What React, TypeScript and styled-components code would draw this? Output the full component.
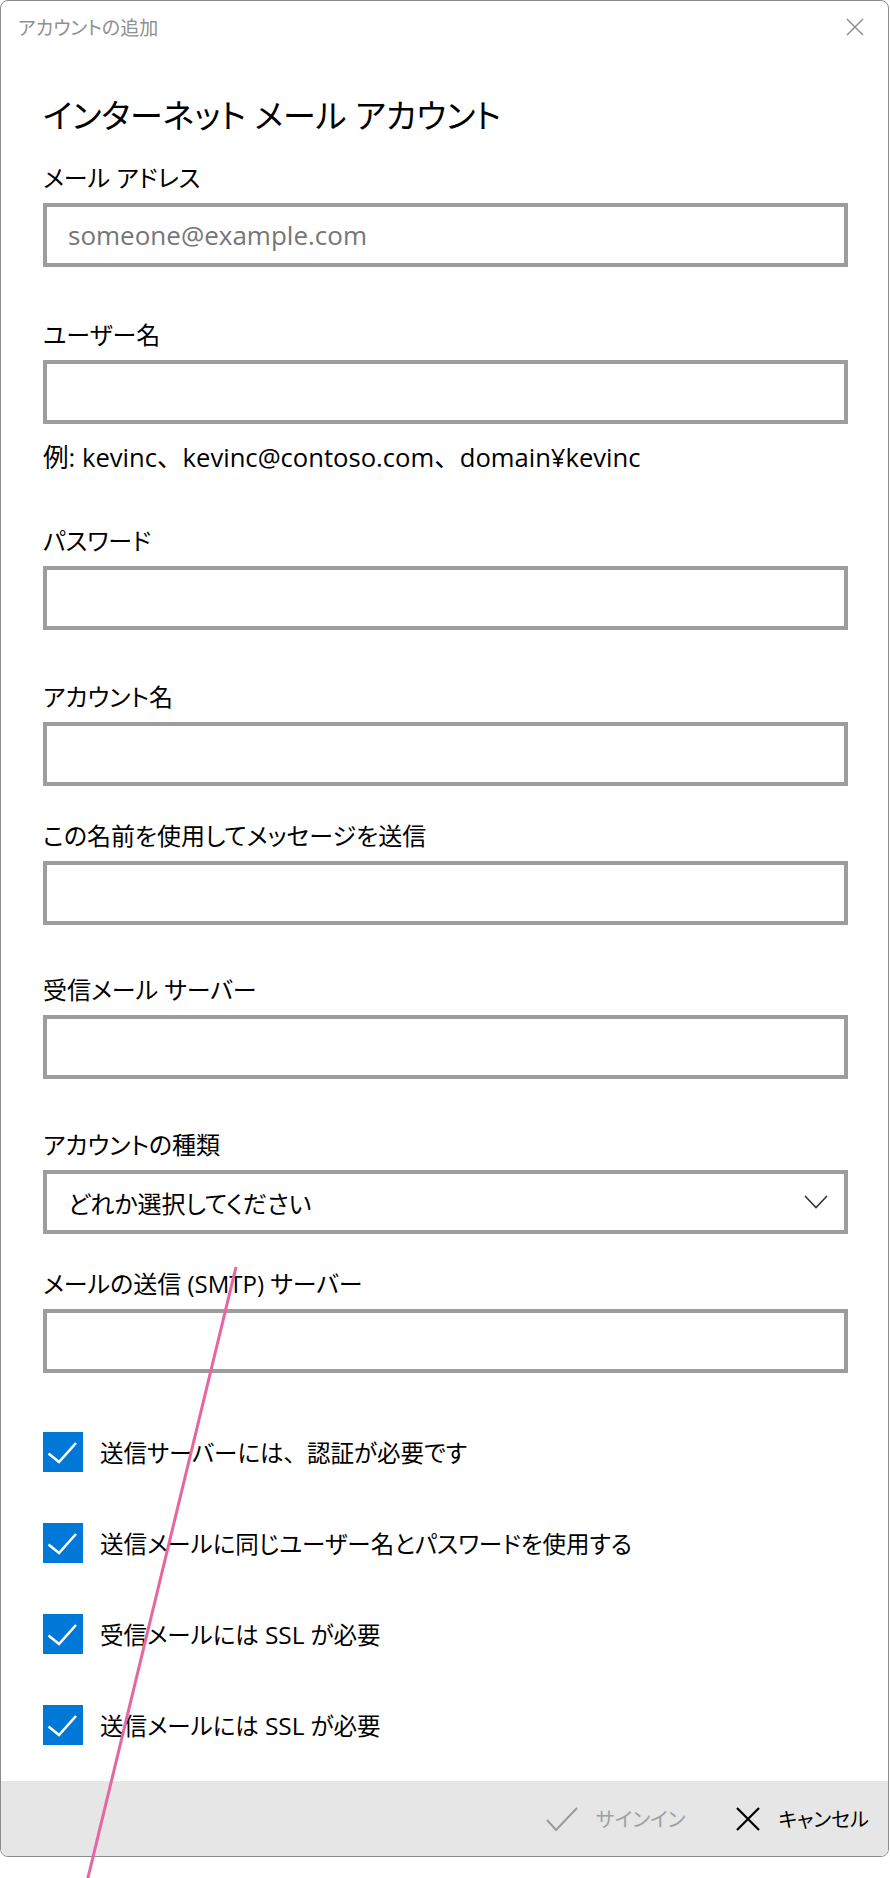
import React from "react";
import styled, { createGlobalStyle } from "styled-components";

const GlobalStyle = createGlobalStyle`
  html, body { margin: 0; padding: 0; background: #ffffff; }
  body {
    font-family: "Open Sans", "Noto Sans CJK JP", sans-serif;
    color: #000;
    font-feature-settings: "palt";
  }
  * { box-sizing: border-box; }
`;

const Page = styled.div`
  position: relative;
  width: 890px;
  height: 1878px;
  background: #fff;
`;

const Window = styled.div`
  width: 889px;
  border: 1px solid #8c8c8c;
  border-radius: 8px;
  overflow: hidden;
  display: flex;
  flex-direction: column;
  background: #fff;
`;

const TitleBar = styled.div`
  height: 52px;
  display: flex;
  align-items: center;
  justify-content: space-between;
  padding: 0 24px 0 17px;
`;

const TitleText = styled.span`
  font-size: 19px;
  color: #909090;
  font-feature-settings: "palt";
`;

const CloseIcon = styled.svg`
  width: 18px;
  height: 18px;
  display: block;
`;

const Content = styled.div`
  display: flex;
  flex-direction: column;
  padding: 37px 40px 36px 42px;
`;

const Heading = styled.h1`
  margin: 0;
  font-size: 33px;
  line-height: 52px;
  font-weight: 400;
  font-feature-settings: "palt";
`;

const Field = styled.div<{ $mt: number }>`
  display: flex;
  flex-direction: column;
  gap: 7px;
  margin-top: ${(p) => p.$mt}px;
`;

const Label = styled.div`
  font-size: 24px;
  line-height: 36px;
  font-feature-settings: "palt";
`;

const TextBox = styled.input`
  height: 64px;
  width: 100%;
  border: 4px solid #9d9d9d;
  background: #fff;
  padding: 0 21px;
  font-family: "Open Sans", "Noto Sans CJK JP", sans-serif;
  font-size: 26px;
  color: #000;
  outline: none;
  &::placeholder { color: #767676; }
`;

const Hint = styled.div`
  margin-top: 16px;
  font-size: 25.6px;
  line-height: 36px;
  font-feature-settings: "palt";
`;

const Punct = styled.span`
  font-feature-settings: normal;
`;

const Latin = styled.span`
  font-size: 1.04em;
`;

const SelectBox = styled.div`
  height: 64px;
  border: 4px solid #9d9d9d;
  background: #fff;
  display: flex;
  align-items: center;
  justify-content: space-between;
  padding: 0 16px 0 21px;
  font-size: 24px;
  font-feature-settings: "palt";
`;

const Chevron = styled.svg`
  width: 24px;
  height: 14px;
  display: block;
`;

const CheckList = styled.div`
  display: flex;
  flex-direction: column;
  gap: 51px;
  margin-top: 59px;
`;

const CheckRow = styled.label`
  display: flex;
  align-items: center;
  gap: 17px;
  height: 40px;
  font-size: 23.5px;
  font-feature-settings: "palt";
`;

const CheckBox = styled.span`
  width: 40px;
  height: 40px;
  flex: none;
  background: #0078d7;
  display: flex;
  align-items: center;
  justify-content: center;
`;

const Footer = styled.div`
  height: 75px;
  background: #e6e6e6;
  display: flex;
  justify-content: flex-end;
  align-items: center;
  padding-right: 19px;
  gap: 51px;
`;

const FooterButton = styled.div<{ $disabled?: boolean }>`
  display: flex;
  align-items: center;
  gap: 18px;
  font-size: 20px;
  color: ${(p) => (p.$disabled ? "#a0a0a0" : "#000")};
  font-feature-settings: "palt";
`;

const Overlay = styled.svg`
  position: absolute;
  top: 0;
  left: 0;
  pointer-events: none;
`;

const fields: { label: string; mt: number }[] = [
  { label: "パスワード", mt: 47 },
  { label: "アカウント名", mt: 49 },
  { label: "この名前を使用してメッセージを送信", mt: 32 },
  { label: "受信メール サーバー", mt: 47 },
];

const checks: React.ReactNode[] = [
  <>送信サーバーには<Punct>、</Punct>認証が必要です</>,
  "送信メールに同じユーザー名とパスワードを使用する",
  <>受信メールには <Latin>SSL</Latin> が必要</>,
  <>送信メールには <Latin>SSL</Latin> が必要</>,
];

export default function App() {
  return (
    <Page>
      <GlobalStyle />
      <Window>
        <TitleBar>
          <TitleText>アカウントの追加</TitleText>
          <CloseIcon viewBox="0 0 18 18">
            <path d="M1 1 L17 17 M17 1 L1 17" stroke="#8a8a8a" strokeWidth="1.4" fill="none" />
          </CloseIcon>
        </TitleBar>
        <Content>
          <Heading>インターネット メール アカウント</Heading>
          <Field $mt={18}>
            <Label>メール アドレス</Label>
            <TextBox placeholder="someone@example.com" readOnly />
          </Field>
          <Field $mt={50}>
            <Label>ユーザー名</Label>
            <TextBox readOnly />
          </Field>
          <Hint>
            例: kevinc<Punct>、</Punct>kevinc@contoso.com<Punct>、</Punct>domain¥kevinc
          </Hint>
          {fields.map((f) => (
            <Field key={f.label} $mt={f.mt}>
              <Label>{f.label}</Label>
              <TextBox readOnly />
            </Field>
          ))}
          <Field $mt={48}>
            <Label>アカウントの種類</Label>
            <SelectBox>
              <span>どれか選択してください</span>
              <Chevron viewBox="0 0 24 14">
                <path d="M1 1 L12 12.5 L23 1" stroke="#333" strokeWidth="1.6" fill="none" />
              </Chevron>
            </SelectBox>
          </Field>
          <Field $mt={32}>
            <Label>メールの送信 (SMTP) サーバー</Label>
            <TextBox readOnly />
          </Field>
          <CheckList>
            {checks.map((c, i) => (
              <CheckRow key={i}>
                <CheckBox>
                  <svg width="40" height="40" viewBox="0 0 40 40">
                    <path d="M5.5 21.5 L16 30 L33 11" stroke="#fff" strokeWidth="2.6" fill="none" />
                  </svg>
                </CheckBox>
                <span>{c}</span>
              </CheckRow>
            ))}
          </CheckList>
        </Content>
        <Footer>
          <FooterButton $disabled>
            <svg width="32" height="24" viewBox="0 0 32 24">
              <path d="M1 13 L10 23 L31 1" stroke="#9a9a9a" strokeWidth="2" fill="none" />
            </svg>
            <span>サインイン</span>
          </FooterButton>
          <FooterButton>
            <svg width="24" height="24" viewBox="0 0 24 24">
              <path d="M1 1 L23 23 M23 1 L1 23" stroke="#000" strokeWidth="2.2" fill="none" />
            </svg>
            <span>キャンセル</span>
          </FooterButton>
        </Footer>
      </Window>
      <Overlay width="890" height="1878" viewBox="0 0 890 1878">
        <line x1="236" y1="1267" x2="85" y2="1890" stroke="#e8669f" strokeWidth="3" />
      </Overlay>
    </Page>
  );
}
